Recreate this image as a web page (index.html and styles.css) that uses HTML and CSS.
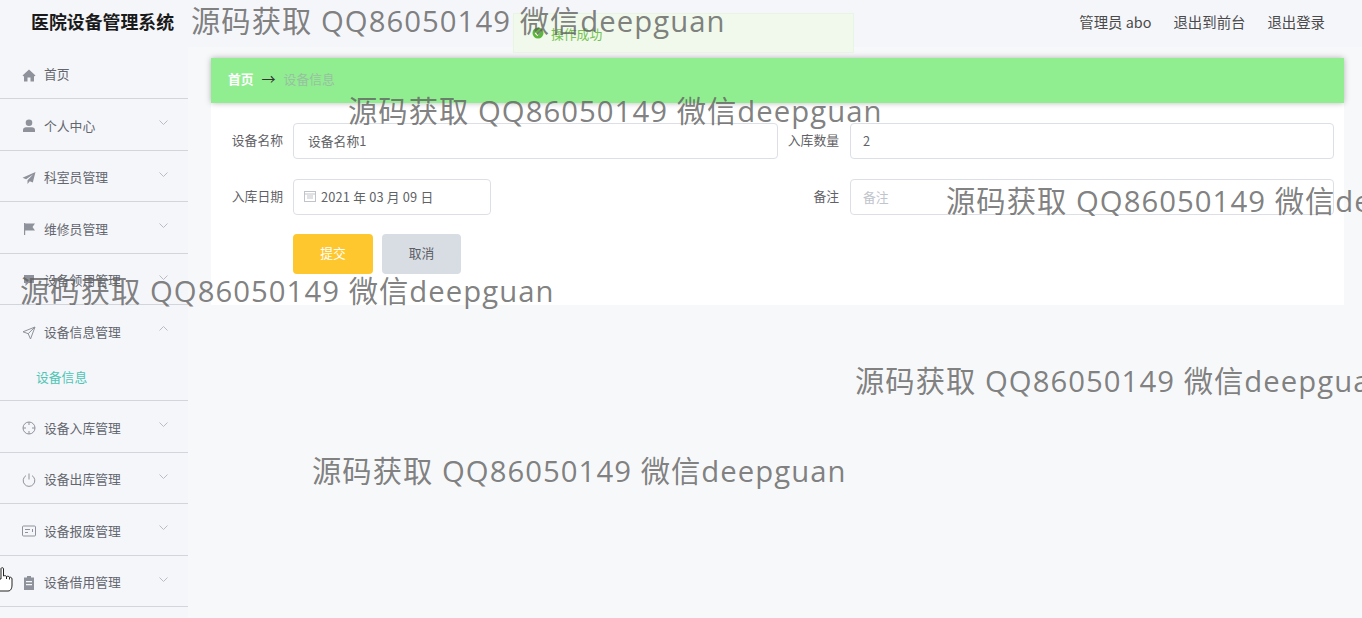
FILE: index.html
```html
<!DOCTYPE html>
<html lang="zh-CN">
<head>
<meta charset="utf-8">
<title>医院设备管理系统</title>
<link rel="stylesheet" href="styles.css">
</head>
<body>
<div class="app">
  <header class="topbar">
    <h1 class="brand">医院设备管理系统</h1>
    <nav class="topnav">
      <span>管理员 abo</span>
      <a>退出到前台</a>
      <a>退出登录</a>
    </nav>
  </header>
  <div class="body-row">
    <aside class="sidebar">
      <div class="menu-row">
        <svg class="mi" viewBox="0 0 14 14"><path class="fill" d="M7 1.500 .5 7.500 2 8.500V13.500h3.500V9.500h3v4H12V8.500l1.500-1z"/></svg>
        <span>首页</span>
      </div>
      <div class="menu-row">
        <svg class="mi" viewBox="0 0 14 14"><circle class="fill" cx="7" cy="3.800" r="3.300"/><path class="fill" d="M1 13v-2.200C1 9 2.400 8.200 4 8.200h6c1.600 0 3 .8 3 2.600V13z"/></svg>
        <span>个人中心</span>
        <svg class="chev" viewBox="0 0 9 5"><path d="M.5.5 4.500 4.500 8.500.5"/></svg>
      </div>
      <div class="menu-row">
        <svg class="mi" viewBox="0 0 14 14"><path class="fill" d="M13.500 1 .5 6.800l3.600 1.500L11 3.500 5.500 9.300V13l2.300-2.800 3 1.300z"/></svg>
        <span>科室员管理</span>
        <svg class="chev" viewBox="0 0 9 5"><path d="M.5.5 4.500 4.500 8.500.5"/></svg>
      </div>
      <div class="menu-row">
        <svg class="mi" viewBox="0 0 14 14"><path class="fill" d="M2 1h1.200v12H2zM3.200 1.500h9.800L10.500 5 13 8.500H3.200z"/></svg>
        <span>维修员管理</span>
        <svg class="chev" viewBox="0 0 9 5"><path d="M.5.5 4.500 4.500 8.500.5"/></svg>
      </div>
      <div class="menu-row">
        <svg class="mi" viewBox="0 0 14 14"><path class="fill" d="M2 1h10v8H6.500L3.500 12V9H2z"/></svg>
        <span>设备领用管理</span>
        <svg class="chev" viewBox="0 0 9 5"><path d="M.5.5 4.500 4.500 8.500.5"/></svg>
      </div>
      <div class="menu-group">
        <div class="menu-row menu-row-open">
          <svg class="mi" viewBox="0 0 14 14"><path class="line" d="M13 1 1 5.800l5.200 1.900L8.500 13z"/><path class="line" d="M13 1 6.200 7.700"/></svg>
          <span>设备信息管理</span>
          <svg class="chev" viewBox="0 0 9 5"><path d="M.5 4.500 4.500.5 8.500 4.500"/></svg>
        </div>
        <div class="submenu-item">设备信息</div>
      </div>
      <div class="menu-row">
        <svg class="mi" viewBox="0 0 14 14"><circle class="line" cx="7" cy="7" r="6"/><path class="line" d="M7 1v3M7 10v3M1 7h3M10 7h3"/></svg>
        <span>设备入库管理</span>
        <svg class="chev" viewBox="0 0 9 5"><path d="M.5.5 4.500 4.500 8.500.5"/></svg>
      </div>
      <div class="menu-row">
        <svg class="mi" viewBox="0 0 14 14"><path class="line" d="M4 2.600a5.800 5.800 0 1 0 6 0"/><path class="line" d="M7 .5v6"/></svg>
        <span>设备出库管理</span>
        <svg class="chev" viewBox="0 0 9 5"><path d="M.5.5 4.500 4.500 8.500.5"/></svg>
      </div>
      <div class="menu-row">
        <svg class="mi" viewBox="0 0 14 14"><rect class="line" x=".5" y="2" width="13" height="10" rx="1"/><path class="line" d="M3 5.500h5M3 8.500h3M10.500 5v3"/></svg>
        <span>设备报废管理</span>
        <svg class="chev" viewBox="0 0 9 5"><path d="M.5.5 4.500 4.500 8.500.5"/></svg>
      </div>
      <div class="menu-row">
        <svg class="mi" viewBox="0 0 14 14"><path class="fill" d="M5 0h4v1.500h3V14H2V1.500h3zM4 5v1.200h6V5zm0 3v1.200h6V8z"/></svg>
        <span>设备借用管理</span>
        <svg class="chev" viewBox="0 0 9 5"><path d="M.5.5 4.500 4.500 8.500.5"/></svg>
      </div>
    </aside>
    <main class="main">
      <div class="breadcrumb">
        <span class="crumb-home">首页</span>
        <span class="crumb-sep">→</span>
        <span class="crumb-cur">设备信息</span>
      </div>
      <form class="panel">
        <label class="f-label">设备名称</label>
        <input class="f-input" type="text" value="设备名称1">
        <label class="f-label f-label-r">入库数量</label>
        <input class="f-input f-input-r" type="text" value="2">
        <label class="f-label">入库日期</label>
        <div class="f-input f-date">
          <svg class="cal" viewBox="0 0 12 12"><rect x=".5" y="1.500" width="11" height="10"/><path d="M.5 4h11M3 6h6M3 8h6"/></svg>
          <span class="date-text">2021 年 03 月 09 日</span>
        </div>
        <label class="f-label f-label-r">备注</label>
        <input class="f-input f-input-r" type="text" placeholder="备注">
        <div class="actions">
          <button class="btn btn-ok" type="button">提交</button>
          <button class="btn btn-cancel" type="button">取消</button>
        </div>
      </form>
    </main>
  </div>
</div>

<div class="toast">
  <svg class="toast-ic" viewBox="0 0 12 12"><circle cx="6" cy="6" r="5.500"/><path d="M3.200 6 5.300 8 8.800 4.200"/></svg>
  <span>操作成功</span>
</div>

<div class="wm wm-1">源码获取 QQ86050149 微信deepguan</div>
<div class="wm wm-2">源码获取 QQ86050149 微信deepguan</div>
<div class="wm wm-3">源码获取 QQ86050149 微信deepguan</div>
<div class="wm wm-4">源码获取 QQ86050149 微信deepguan</div>
<div class="wm wm-5">源码获取 QQ86050149 微信deepguan</div>
<div class="wm wm-6">源码获取 QQ86050149 微信deepguan</div>

<svg class="cursor" viewBox="0 0 13 25"><path d="M1 1.500C1 .5 3.500 .5 3.500 1.500V9C4.500 8.500 6 8.500 6.500 9.500 7.500 9 9 9.200 9.500 10.200 10.500 10 12 10.500 12 12V18C12 21 11 24 8 24H-1V12H1zM6.500 9.500V12M9.500 10.200V12.500"/></svg>
</body>
</html>
```

FILE: styles.css
```css
* { box-sizing: border-box; }
html, body { margin: 0; height: 100%; overflow: hidden; }
body {
  position: relative;
  background: #f7f8fa;
  color: #606266;
  font-family: "Noto Sans CJK SC", "Noto Sans", sans-serif;
  font-size: 12.8px;
}
.app { display: flex; flex-direction: column; height: 100vh; }
.topbar {
  flex: 0 0 47px;
  display: flex;
  align-items: center;
  justify-content: space-between;
  background: #f5f6fa;
  padding: 0 37px 4px 31px;
}
.brand { margin: 0; font-size: 17.9px; font-weight: 700; color: #1a1a1a; line-height: 43px; white-space: nowrap; }
.topnav { display: flex; gap: 22px; font-size: 14.400px; line-height: 20px; color: #4a4a4a; }
.body-row { flex: 1; display: flex; min-height: 0; }
.sidebar { flex: 0 0 188px; background: #f5f6fa; overflow: hidden; padding-top: .5px; }
.menu-row {
  height: 51.5px;
  display: flex;
  align-items: center;
  padding: 2px 20px 0 22px;
  border-bottom: 1px solid #d2d5db;
  color: #63666e;
}
.menu-row-open { border-bottom: 0; height: 51px; }
.menu-group { height: 96px; border-bottom: 1px solid #d2d5db; }
.mi { width: 14px; height: 14px; margin-right: 8px; flex: none; position: relative; top: 1px; }
.mi .fill { fill: #8f929b; }
.mi .line { fill: none; stroke: #8f929b; stroke-width: 1; }
.chev {
  width: 9px; height: 5px; margin-left: auto; align-self: flex-start; margin-top: 19px;
  fill: none; stroke: #b9bcc4; stroke-width: 1;
}
.submenu-item { padding-left: 36px; color: #4ec5b5; line-height: 44px; margin-top: -1px; }
.main { flex: 1; padding: 11px 18px 0 23px; min-width: 0; }
.breadcrumb {
  height: 45px;
  display: flex;
  align-items: center;
  gap: 8px;
  padding: 0 0 5px 17px;
  background: #90ee90;
  box-shadow: 0 0 6px rgba(0, 0, 0, .28);
  position: relative;
}
.crumb-home { color: #fff; font-weight: 700; }
.crumb-sep { color: #333; font-size: 14px; }
.crumb-cur { color: #98c0a2; }
.panel {
  background: #fff;
  padding: 20px 10px 34px;
  display: grid;
  grid-template-columns: 72px 485px 72px 484px;
  grid-auto-rows: 36px;
  row-gap: 20px;
  align-items: center;
}
.f-label { text-align: right; padding-right: 10px; color: #5f6166; line-height: 34px; height: 36px; }
.f-label-r { padding-right: 11px; }
.f-input {
  height: 36px;
  width: 100%;
  border: 1px solid #dcdfe6;
  border-radius: 4px;
  padding: 0 14px 2px;
  background: #fff;
  color: #606266;
  font: inherit;
  outline: 0;
}
.f-input-r { padding-left: 12px; }
.f-input::placeholder { color: #c0c4cc; }
.f-date { display: flex; align-items: center; gap: 5px; width: 198px; padding-left: 10px; }
.date-text { letter-spacing: .18px; }
.cal { width: 12px; height: 12px; fill: none; stroke: #bfc3ca; stroke-width: 1; }
.actions { grid-column: 2 / 5; align-self: start; display: flex; gap: 9px; height: 40px; margin-top: -1px; }
.btn { height: 40px; border: 0; border-radius: 4px; font: inherit; padding: 0 0 4px; }
.btn-ok { width: 80px; background: #ffc72e; color: #fff; }
.btn-cancel { width: 79px; background: #d8dce3; color: #5b5e66; }
.toast {
  position: absolute;
  left: 513px; top: 13px;
  width: 341px; height: 40px;
  display: flex;
  align-items: center;
  gap: 7px;
  padding-left: 18px;
  background: #f0f9eb;
  border: 1px solid #e9f4e2;
  color: #73c24f;
}
.toast-ic { width: 12px; height: 12px; }
.toast-ic circle { fill: #5cb83a; }
.toast-ic path { fill: none; stroke: #fff; stroke-width: 1.400; }
.wm {
  position: absolute;
  font-family: "Open Sans", "Noto Sans CJK SC", sans-serif;
  font-size: 29.300px;
  letter-spacing: 1.040px;
  line-height: 40px;
  height: 40px;
  color: rgba(96, 96, 96, .8);
  white-space: nowrap;
}
.wm-1 { left: 191px; top: 1px; }
.wm-2 { left: 348px; top: 91px; }
.wm-3 { left: 946px; top: 181px; height: 35px; overflow: hidden; }
.wm-4 { left: 20px; top: 271px; }
.wm-5 { left: 855px; top: 361px; }
.wm-6 { left: 312px; top: 451px; }
.cursor {
  position: absolute;
  left: 0; top: 567px;
  width: 13px; height: 25px;
  fill: #fff; stroke: #222; stroke-width: 1;
}
```
